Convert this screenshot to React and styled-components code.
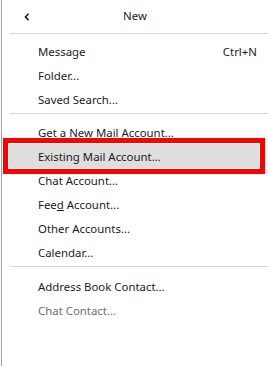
import React from "react";
import styled, { createGlobalStyle } from "styled-components";

const GlobalStyle = createGlobalStyle`
  html, body {
    margin: 0;
    padding: 0;
    background: #ffffff;
  }
  body {
    font-family: "Noto Sans", "Liberation Sans", sans-serif;
    font-size: 11.4px;
    color: #1a1a1a;
  }
`;

const Panel = styled.div`
  margin-left: 1px;
  border-left: 1px solid #a0a0a0;
  min-height: 366px;
  box-sizing: border-box;
  background: #ffffff;
`;

const Header = styled.div`
  height: 33px;
  display: grid;
  grid-template-columns: 40px 1fr 40px;
  align-items: center;
`;

const BackButton = styled.div`
  display: flex;
  align-items: center;
  padding-left: 22px;
  height: 100%;
`;

const Title = styled.div`
  text-align: center;
  color: #1a1a1a;
  padding-bottom: 3px;
`;

const Separator = styled.div`
  height: 1px;
  background: #d8d8d8;
  margin: ${(p) => p.$margin || "0"};
  margin-left: 8px;
`;

const List = styled.div`
  display: flex;
  flex-direction: column;
  padding-top: 5px;
`;

const Item = styled.div`
  height: 24px;
  margin: 0 9px 0 7px;
  padding: 0 2px 0 29px;
  display: flex;
  align-items: center;
  justify-content: space-between;
  color: ${(p) => (p.$disabled ? "#6d6d6d" : "#1a1a1a")};
  background: ${(p) => (p.$active ? "#dedede" : "transparent")};
  outline: ${(p) => (p.$active ? "5px solid #ff0000" : "none")};
  outline-offset: 1px;
  white-space: nowrap;
`;

const Shortcut = styled.span`
  color: #1a1a1a;
`;

const Key = styled.span`
  text-decoration: underline;
`;

function Chevron() {
  return (
    <svg width="6" height="8" viewBox="0 0 6 8">
      <polyline
        points="4.6,0.8 1.5,4 4.6,7.2"
        fill="none"
        stroke="#1a1a1a"
        strokeWidth="1.6"
      />
    </svg>
  );
}

export default function App() {
  return (
    <>
      <GlobalStyle />
      <Panel>
        <Header>
          <BackButton>
            <Chevron />
          </BackButton>
          <Title>New</Title>
          <div />
        </Header>
        <Separator />
        <List>
          <Item>
            <span>Message</span>
            <Shortcut>Ctrl+N</Shortcut>
          </Item>
          <Item>Folder...</Item>
          <Item>Saved Search...</Item>
          <Separator $margin="2px 0 6px" />
          <Item>Get a New Mail Account...</Item>
          <Item $active>Existing Mail Account...</Item>
          <Item>Chat Account...</Item>
          <Item>
            <span>
              Fee<Key>d</Key> Account...
            </span>
          </Item>
          <Item>Other Accounts...</Item>
          <Item>Calendar...</Item>
          <Separator $margin="2px 0 7px" />
          <Item>Address Book Contact...</Item>
          <Item $disabled>Chat Contact...</Item>
        </List>
      </Panel>
    </>
  );
}
